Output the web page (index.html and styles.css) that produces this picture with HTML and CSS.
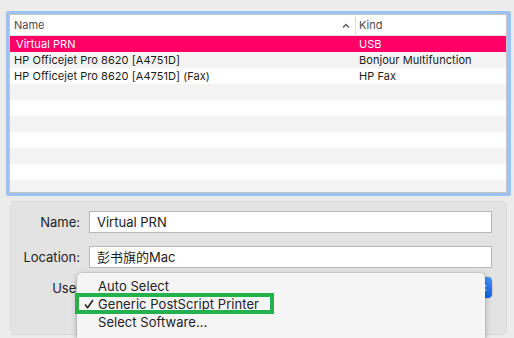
FILE: index.html
```html
<!DOCTYPE html>
<html>
<head>
<meta charset="utf-8">
<link rel="stylesheet" href="styles.css">
</head>
<body>
<div class="table-ring">
  <div class="table">
    <div class="thead">
      <div class="col-name">Name
        <svg class="sort" width="8" height="5" viewBox="0 0 8 5"><polyline points="1,4.5 4,1.5 7,4.5" fill="none" stroke="#555" stroke-width="1.3"/></svg>
      </div>
      <div class="col-kind">Kind</div>
    </div>
    <div class="row selected"><div class="col-name sel-name">Virtual PRN</div><div class="col-kind">USB</div></div>
    <div class="row alt"><div class="col-name">HP Officejet Pro 8620 [A4751D]</div><div class="col-kind">Bonjour Multifunction</div></div>
    <div class="row"><div class="col-name">HP Officejet Pro 8620 [A4751D] (Fax)</div><div class="col-kind">HP Fax</div></div>
    <div class="row alt"></div>
    <div class="row"></div>
    <div class="row alt"></div>
    <div class="row"></div>
    <div class="row alt"></div>
    <div class="row"></div>
    <div class="row alt last"></div>
  </div>
</div>

<div class="panel">
  <div class="form">
    <label class="lbl">Name:</label>
    <div class="field">Virtual PRN</div>
    <label class="lbl">Location:</label>
    <div class="field">彭书旗的Mac</div>
    <label class="lbl use">Use:</label>
    <div class="popup"><span class="popup-text"></span><span class="popup-cap">
      <svg width="7" height="12" viewBox="0 0 7 12"><polyline points="1,4.5 3.5,2 6,4.5" fill="none" stroke="#fff" stroke-width="1.3"/><polyline points="1,7.5 3.5,10 6,7.5" fill="none" stroke="#fff" stroke-width="1.3"/></svg>
    </span></div>
  </div>
  <div class="menu">
    <div class="item">Auto Select</div>
    <div class="item checked"><svg class="check" width="10" height="10" viewBox="0 0 10 10"><polyline points="1,5.5 3.6,8.8 9,1" fill="none" stroke="#222" stroke-width="1.5" stroke-linejoin="round"/></svg>Generic PostScript Printer</div>
    <div class="item">Select Software…</div>
  </div>
  <div class="highlight"></div>
</div>
</body>
</html>
```

FILE: styles.css
```css
* { box-sizing: border-box; }
html, body {
  margin: 0;
  padding: 0;
  background: #ececec;
  width: 514px;
  height: 338px;
  overflow: hidden;
  font-family: "Inter", "Liberation Sans", "Noto Sans CJK SC", sans-serif;
  color: #1b1b1b;
}

.table-ring {
  margin: 11px 3px 0 6px;
  height: 185px;
  border: 3px solid #9cc3f3;
  border-right-width: 4px;
  border-radius: 2px;
}
.table {
  height: 100%;
  border: 1px solid #c4c4c4;
  background: #fff;
  overflow: hidden;
}
.thead {
  display: flex;
  height: 21px;
  border-bottom: 1px solid #e0e0e0;
  font-size: 11px;
  color: #4b4b4b;
  align-items: center;
}
.thead .col-name {
  position: relative;
  border-right: 1px solid #dcdcdc;
  height: 19px;
  display: flex;
  align-items: center;
}
.sort {
  position: absolute;
  right: 5px;
  top: 7px;
}
.col-name {
  width: 346px;
  padding-left: 4px;
  white-space: nowrap;
}
.col-kind {
  flex: 1;
  padding-left: 3px;
  white-space: nowrap;
}
.row {
  display: flex;
  height: 16px;
  align-items: center;
  font-size: 11px;
  letter-spacing: 0.05px;
  color: #1b1b1b;
}
.row.alt { background: #f3f3f3; }
.row.selected { background: #fe0066; color: #fff; }
.sel-name { padding-left: 6px; }

.panel {
  position: relative;
  margin: 5px 7px 0 10px;
  height: 134px;
  background: #e3e3e3;
  border: 1px solid #dadada;
  border-radius: 5px;
  padding-top: 9px;
}
.form {
  display: grid;
  grid-template-columns: 69px 403px;
  column-gap: 9px;
  row-gap: 13px;
  align-items: center;
  font-size: 13px;
}
.lbl {
  text-align: right;
  color: #222;
}
.field {
  height: 22px;
  background: #fff;
  border: 1px solid #b7b7b7;
  padding-left: 7px;
  line-height: 20px;
  font-size: 13px;
  color: #1b1b1b;
}
.use { margin-top: -4px; }
.popup {
  margin-top: -4px;
  height: 21px;
  display: flex;
  background: #fff;
  border-radius: 4px;
  box-shadow: 0 0 0 0.5px #b7b7b7;
}
.popup-text { flex: 1; }
.popup-cap {
  width: 17px;
  background: linear-gradient(#4a90f8, #1263e6);
  border-radius: 0 4px 4px 0;
  display: flex;
  align-items: center;
  justify-content: center;
}

.menu {
  position: absolute;
  left: 66px;
  top: 71px;
  width: 408px;
  height: 70px;
  background: #f5f5f5;
  border-radius: 5px;
  box-shadow: 0 2px 6px rgba(0,0,0,0.28), 0 0 0 0.5px rgba(0,0,0,0.12);
  padding-top: 4px;
  font-size: 13px;
  letter-spacing: 0.05px;
}
.item {
  height: 18px;
  line-height: 18px;
  padding-left: 21px;
  position: relative;
  color: #222;
}
.check {
  position: absolute;
  left: 7px;
  top: 4px;
}
.highlight {
  position: absolute;
  left: 64px;
  top: 91px;
  width: 199px;
  height: 21px;
  border: 4px solid #22b14c;
}
```
